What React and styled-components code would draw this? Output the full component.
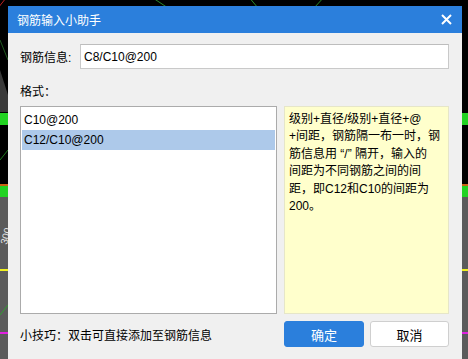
import React from 'react'
import styled, { createGlobalStyle } from 'styled-components'

const GlobalStyle = createGlobalStyle`
  html, body {
    margin: 0;
    padding: 0;
    background: #000;
  }
  body {
    width: 468px;
    height: 359px;
    overflow: hidden;
    font-family: "Liberation Sans", "Noto Sans CJK SC", sans-serif;
    font-size: 12px;
    color: #000;
  }
`

const Screen = styled.div`
  position: relative;
  width: 468px;
  height: 359px;
  overflow: hidden;
`

const Backdrop = styled.svg`
  position: absolute;
  left: 0;
  top: 0;
`

const Dialog = styled.div`
  position: relative;
  margin: 6px 0 0 8px;
  width: 454px;
  height: 353px;
  background: #f0f0f0;
  display: flex;
  flex-direction: column;
`

const TitleBar = styled.div`
  height: 27px;
  background: #2b7fdc;
  display: flex;
  align-items: center;
  justify-content: space-between;
  padding: 0 10px 0 9px;
  color: #fff;
  font-size: 12px;
`

const Body = styled.div`
  padding: 11px 13px 0 12px;
  display: flex;
  flex-direction: column;
`

const FieldRow = styled.div`
  display: flex;
  align-items: center;
  height: 25px;
`

const FieldLabel = styled.div`
  width: 60px;
  flex: none;
`

const TextInput = styled.div`
  flex: 1;
  height: 25px;
  box-sizing: border-box;
  border: 1px solid #c9c9c9;
  border-top-color: #bdbdbd;
  background: #fff;
  display: flex;
  align-items: center;
  padding-left: 3px;
`

const SectionLabel = styled.div`
  margin: 15px 0 6px;
  height: 16px;
  line-height: 16px;
`

const Panels = styled.div`
  display: grid;
  grid-template-columns: 257px 1fr;
  column-gap: 7px;
  height: 208px;
`

const ListBox = styled.div`
  border: 1px solid #ababab;
  background: #fff;
  padding: 3px 1px 0 1px;
`

const ListRow = styled.div`
  height: 20px;
  line-height: 20px;
  padding-left: 2px;
  background: ${({ selected }) => (selected ? '#adc9ea' : 'transparent')};
`

const HelpBox = styled.div`
  border: 1px solid #e6e6c8;
  background: #ffffcc;
  padding: 4px 0 0 4px;
  line-height: 17.4px;
  white-space: nowrap;
`

const HelpLine = styled.div``

const Footer = styled.div`
  display: grid;
  grid-template-columns: 257px 1fr;
  column-gap: 7px;
  margin-top: 7px;
  height: 26px;
  align-items: center;
`

const Buttons = styled.div`
  display: grid;
  grid-template-columns: 80px 79px;
  column-gap: 6px;
`

const Button = styled.div`
  height: 26px;
  box-sizing: border-box;
  border-radius: 3px;
  display: flex;
  align-items: center;
  justify-content: center;
  font-size: 13px;
  color: ${({ primary }) => (primary ? '#fff' : '#000')};
  background: ${({ primary }) => (primary ? '#2b7fdc' : '#fff')};
  border: 1px solid ${({ primary }) => (primary ? '#2b7fdc' : '#cfcfcf')};
`

const CloseIcon = () => (
  <svg width="11" height="11" viewBox="0 0 11 11">
    <path d="M1 1 L10 10 M10 1 L1 10" stroke="#fff" strokeWidth="2" />
  </svg>
)

const CadBackground = () => (
  <Backdrop width="468" height="359" viewBox="0 0 468 359">
    <rect width="468" height="359" fill="#000" />
    <line x1="-2" y1="8" x2="6" y2="-2" stroke="#c02020" strokeWidth="1" />
    <line x1="150" y1="-4" x2="168" y2="8" stroke="#2a8a2a" strokeWidth="1" />
    <line x1="248" y1="-4" x2="258" y2="8" stroke="#2a8a2a" strokeWidth="1" />
    <line x1="325" y1="-4" x2="314" y2="8" stroke="#2a8a2a" strokeWidth="1" />
    <polygon points="0,70 8,95 8,112 0,112" fill="#3a3a3a" />
    <line x1="0" y1="40" x2="8" y2="60" stroke="#1f5a1f" strokeWidth="1" />
    <rect x="0" y="113" width="468" height="12" fill="#22d322" />
    <line x1="0" y1="160" x2="8" y2="150" stroke="#1f7a1f" strokeWidth="1" />
    <rect x="0" y="184" width="468" height="2" fill="#c86414" />
    <rect x="0" y="186" width="468" height="11" fill="#22d322" />
    <rect x="0" y="197" width="468" height="162" fill="#5b5b5b" />
    <text
      x="0"
      y="0"
      fill="#e8e8e8"
      fontSize="10"
      fontFamily="Liberation Sans"
      transform="translate(7 245) rotate(-75)"
    >
      300
    </text>
    <rect x="0" y="269" width="468" height="2" fill="#f0f020" />
    <line x1="0" y1="315" x2="8" y2="305" stroke="#30a030" strokeWidth="1" />
    <rect x="0" y="332" width="468" height="2" fill="#e020e0" />
  </Backdrop>
)

const App = () => {
  return (
    <Screen>
      <GlobalStyle />
      <CadBackground />
      <Dialog>
        <TitleBar>
          <span>钢筋输入小助手</span>
          <CloseIcon />
        </TitleBar>
        <Body>
          <FieldRow>
            <FieldLabel>钢筋信息:</FieldLabel>
            <TextInput>C8/C10@200</TextInput>
          </FieldRow>
          <SectionLabel>格式：</SectionLabel>
          <Panels>
            <ListBox>
              <ListRow>C10@200</ListRow>
              <ListRow selected>C12/C10@200</ListRow>
            </ListBox>
            <HelpBox>
              <HelpLine>级别+直径/级别+直径+@</HelpLine>
              <HelpLine>+间距，钢筋隔一布一时，钢</HelpLine>
              <HelpLine>筋信息用 “/” 隔开，输入的</HelpLine>
              <HelpLine>间距为不同钢筋之间的间</HelpLine>
              <HelpLine>距，即C12和C10的间距为</HelpLine>
              <HelpLine>200。</HelpLine>
            </HelpBox>
          </Panels>
          <Footer>
            <span>小技巧：双击可直接添加至钢筋信息</span>
            <Buttons>
              <Button primary>确定</Button>
              <Button>取消</Button>
            </Buttons>
          </Footer>
        </Body>
      </Dialog>
    </Screen>
  )
}

export default App
